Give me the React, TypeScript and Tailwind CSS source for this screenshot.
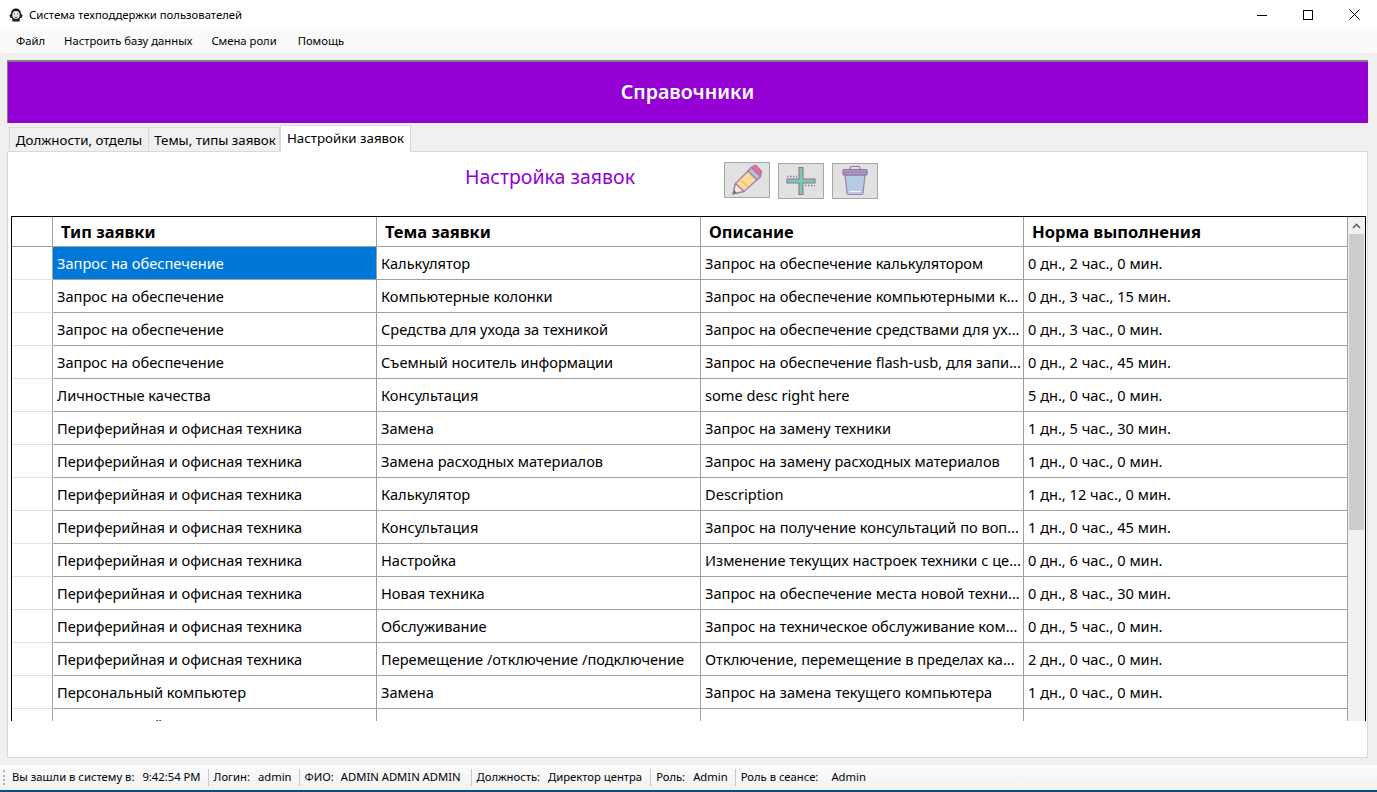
import React from 'react';

const rows = [
  ['Запрос на обеспечение', 'Калькулятор', 'Запрос на обеспечение калькулятором', '0 дн., 2 час., 0 мин.'],
  ['Запрос на обеспечение', 'Компьютерные колонки', 'Запрос на обеспечение компьютерными к...', '0 дн., 3 час., 15 мин.'],
  ['Запрос на обеспечение', 'Средства для ухода за техникой', 'Запрос на обеспечение средствами для ух...', '0 дн., 3 час., 0 мин.'],
  ['Запрос на обеспечение', 'Съемный носитель информации', 'Запрос на обеспечение flash-usb, для запи...', '0 дн., 2 час., 45 мин.'],
  ['Личностные качества', 'Консультация', 'some desc right here', '5 дн., 0 час., 0 мин.'],
  ['Периферийная и офисная техника', 'Замена', 'Запрос на замену техники', '1 дн., 5 час., 30 мин.'],
  ['Периферийная и офисная техника', 'Замена расходных материалов', 'Запрос на замену расходных материалов', '1 дн., 0 час., 0 мин.'],
  ['Периферийная и офисная техника', 'Калькулятор', 'Description', '1 дн., 12 час., 0 мин.'],
  ['Периферийная и офисная техника', 'Консультация', 'Запрос на получение консультаций по воп...', '1 дн., 0 час., 45 мин.'],
  ['Периферийная и офисная техника', 'Настройка', 'Изменение текущих настроек техники с це...', '0 дн., 6 час., 0 мин.'],
  ['Периферийная и офисная техника', 'Новая техника', 'Запрос на обеспечение места новой техни...', '0 дн., 8 час., 30 мин.'],
  ['Периферийная и офисная техника', 'Обслуживание', 'Запрос на техническое обслуживание ком...', '0 дн., 5 час., 0 мин.'],
  ['Периферийная и офисная техника', 'Перемещение /отключение /подключение', 'Отключение, перемещение в пределах ка...', '2 дн., 0 час., 0 мин.'],
  ['Персональный компьютер', 'Замена', 'Запрос на замена текущего компьютера', '1 дн., 0 час., 0 мин.'],
  ['Персональный компьютер', 'Консультация', 'Запрос на консультацию', '0 дн., 3 час., 0 мин.'],
];

const headers = ['Тип заявки', 'Тема заявки', 'Описание', 'Норма выполнения'];
const menu = ['Файл', 'Настроить базу данных', 'Смена роли', 'Помощь'];
const status = [
  { label: 'Вы зашли в систему в:', value: '9:42:54 PM', gap: 'ml-[8px]', end: 'pr-[7px]' },
  { label: 'Логин:', value: 'admin', gap: 'ml-[8px]', end: 'pr-[7px]' },
  { label: 'ФИО:', value: 'ADMIN ADMIN ADMIN', gap: 'ml-[7px]', end: 'pr-[10px]' },
  { label: 'Должность:', value: 'Директор центра', gap: 'ml-[8px]', end: 'pr-[8px]' },
  { label: 'Роль:', value: 'Admin', gap: 'ml-[8px]', end: 'pr-[7px]' },
  { label: 'Роль в сеансе:', value: 'Admin', gap: 'ml-[13px]', end: 'pr-[7px]' },
];

function PencilIcon() {
  return (
    <svg width="32" height="32" viewBox="0 0 32 32">
      <path d="M2 30 L4.5 19.5 L20 4 L29 13 L13 27.5 Z" fill="#f8dd98" stroke="#a17cae" strokeWidth="1.3" />
      <path d="M9 15 L17 23" stroke="#f0c060" strokeWidth="1.5" />
      <path d="M2 30 L4.5 19.5 L13 27.5 Z" fill="#f6ead9" stroke="#a17cae" strokeWidth="1.3" />
      <path d="M17 7 L26 16 L29.5 12.5 L20.5 3.5 Z" fill="#b7bfd4" stroke="#a17cae" strokeWidth="1.3" />
      <path d="M20.5 3.5 L23 1.5 Q24 1 25 1.5 L30.5 7 Q31 8 30.5 9 L29.5 12.5 Z" fill="#ee6c86" stroke="#a17cae" strokeWidth="1.1" />
      <path d="M2 30 L3 26 L6 29 Z" fill="#7d5a93" />
    </svg>
  );
}

function PlusIcon() {
  return (
    <svg width="32" height="32" viewBox="0 0 32 32">
      <path d="M14 2.5 H18 V14 H30 V18 H18 V29.5 H14 V18 H2 V14 H14 Z" fill="#76cfa8" stroke="#96709f" strokeWidth="1.1" />
      <path d="M2 11.5 H12 M20 20.5 H30" stroke="#96709f" strokeWidth="1.5" strokeDasharray="1.5 1.5" fill="none" />
    </svg>
  );
}

function TrashIcon() {
  return (
    <svg width="32" height="32" viewBox="0 0 32 32">
      <path d="M11 5 V3 Q11 1.5 12.5 1.5 H19.5 Q21 1.5 21 3 V5" fill="none" stroke="#96709f" strokeWidth="1.2" />
      <path d="M6 10 L8 28 Q8 29.5 10 29.5 H22 Q24 29.5 24 28 L26 10 Z" fill="#b5cbe6" stroke="#a17cae" strokeWidth="1.2" />
      <rect x="4" y="4.5" width="24" height="5.5" rx="1" fill="#a99ac4" stroke="#96709f" strokeWidth="1.2" />
      <path d="M6 7.2 H26" stroke="#7d6a9c" strokeWidth="1" strokeDasharray="1.5 1.5" />
      <path d="M10 26.5 H22" stroke="#f4f6fb" strokeWidth="1" />
    </svg>
  );
}

function AppLogo() {
  return (
    <svg width="16" height="16" viewBox="0 0 16 16">
      <path d="M8 1.5 C4.5 1.5 3 4 3 7 L1.5 8 L2 10.5 L4 11 L4.5 14.5 H11.5 L12 11 L14 10.5 L14.5 8 L13 7 C13 4 11.5 1.5 8 1.5 Z" fill="#1c1c1c" />
      <ellipse cx="8" cy="8" rx="3.7" ry="4" fill="#ececec" />
      <path d="M6 7 H7 M9 7 H10 M6.5 10 C7.5 11 8.5 11 9.5 10" stroke="#1c1c1c" strokeWidth="1" fill="none" />
    </svg>
  );
}

function ToolButton({ children, top }: { children: React.ReactNode; top: string }) {
  return (
    <div className={`w-[46px] h-[36px] flex items-center justify-center bg-[#e1e1e1] border border-[#a8a8a8] ${top}`}>
      {children}
    </div>
  );
}

const gridCols = 'grid grid-cols-[41px_324px_324px_323px_324px]';

export default function App() {
  return (
    <div className="w-[1377px] h-[792px] flex flex-col overflow-hidden bg-[#f0f0f0] text-black font-['Noto_Sans',sans-serif]">
      {/* window title */}
      <div className="h-[29px] bg-white flex items-center pl-[8px] shrink-0">
        <AppLogo />
        <span className="ml-[5px] text-[11.3px] leading-none">Система техподдержки пользователей</span>
        <div className="ml-auto flex items-center">
          <div className="w-[46px] flex justify-center">
            <svg width="10" height="10" viewBox="0 0 10 10"><path d="M0 5.5 H10" stroke="#000" strokeWidth="1" /></svg>
          </div>
          <div className="w-[46px] flex justify-center">
            <svg width="10" height="10" viewBox="0 0 10 10"><rect x="0.5" y="0.5" width="9" height="9" fill="none" stroke="#000" strokeWidth="1" /></svg>
          </div>
          <div className="w-[46px] flex justify-center">
            <svg width="11" height="11" viewBox="0 0 11 11"><path d="M0.5 0.5 L10.5 10.5 M10.5 0.5 L0.5 10.5" stroke="#000" strokeWidth="1" /></svg>
          </div>
        </div>
      </div>

      {/* menu */}
      <div className="h-[24px] bg-[#fafafa] flex items-center pl-[7px] shrink-0 text-[11.25px]">
        {menu.map((item, i) => (
          <span key={item} className={`px-[9px] ${i === 2 ? 'mr-[3px]' : 'mr-[1px]'}`}>{item}</span>
        ))}
      </div>

      <div className="pl-[7px] pr-[9px] pt-[7px] flex flex-col shrink-0">
        {/* banner */}
        <div className="h-[63px] bg-[#9400d3] border-t-2 border-l border-[#808080] flex items-center justify-center pb-[2px] pr-[1px] text-white text-[19.6px] font-semibold">
          Справочники
        </div>

        {/* tabs */}
        <div className="flex items-end h-[29px] pl-[2px] text-[13.3px] relative z-10">
          <div className="h-[25px] w-[140px] bg-[#f0f0f0] border border-[#d9d9d9] flex items-center justify-center pt-[2px]">Должности, отделы</div>
          <div className="h-[25px] w-[131px] bg-[#f0f0f0] border border-l-0 border-[#d9d9d9] flex items-center justify-center pt-[2px] pl-[2px]">Темы, типы заявок</div>
          <div className="h-[27px] w-[131px] bg-white border border-b-0 border-[#d9d9d9] flex items-center justify-center">Настройки заявок</div>
        </div>

        {/* tab page */}
        <div className="h-[607px] -mt-px bg-white border border-[#d9d9d9] pl-[3px] flex flex-col">
          <div className="h-[64px] flex shrink-0">
            <div className="ml-[454px] w-[259px] mt-[11px] text-[#9400d3] text-[19.5px] leading-[28px] whitespace-nowrap">Настройка заявок</div>
            <div className="mt-[10px] flex gap-[8px] items-start">
              <ToolButton top="mt-0"><PencilIcon /></ToolButton>
              <ToolButton top="mt-[1px]"><PlusIcon /></ToolButton>
              <ToolButton top="mt-[1px]"><TrashIcon /></ToolButton>
            </div>
          </div>

          {/* table */}
          <div className="w-[1355px] h-[505px] border-t-[1.5px] border-x border-black overflow-hidden flex text-[14.6px]">
            <div className="w-[1336px] shrink-0">
              <div className={`${gridCols} h-[30px] border-b border-[#a0a0a0]`}>
                <div className="border-r border-[#a0a0a0]" />
                {headers.map((h) => (
                  <div key={h} className="border-r border-[#a0a0a0] pl-[8px] font-bold text-[16.5px] leading-[29px]">{h}</div>
                ))}
              </div>
              {rows.map((row, i) => (
                <div key={i} className={`${gridCols} h-[33px]`}>
                  <div className="border-r border-[#a0a0a0] border-b border-b-[#e3e3e3]" />
                  {row.map((cell, j) => (
                    <div
                      key={j}
                      className={`border-r border-b border-[#a0a0a0] pl-[4px] leading-[33px] whitespace-nowrap overflow-hidden ${
                        i === 0 && j === 0 ? 'bg-[#0078d7] text-white' : ''
                      }`}
                    >
                      {cell}
                    </div>
                  ))}
                </div>
              ))}
            </div>
            {/* scrollbar */}
            <div className="w-[17px] shrink-0 bg-[#f0f0f0] flex flex-col">
              <div className="h-[17px] flex items-center justify-center">
                <svg width="9" height="6" viewBox="0 0 9 6">
                  <path d="M1 5 L4.5 1.5 L8 5" fill="none" stroke="#606060" strokeWidth="1.6" />
                </svg>
              </div>
              <div className="h-[296px] mx-px bg-[#cdcdcd]" />
            </div>
          </div>
        </div>
      </div>

      {/* status bar */}
      <div className="mt-[7px] h-[25px] bg-gradient-to-b from-[#fbfbfb] to-[#f2f2f2] flex items-center pl-[3px] text-[11.25px] shrink-0">
        <div className="w-[3px] h-[15px] mr-[6px] border-l-2 border-dotted border-[#b0b0b0]" />
        {status.map(({ label, value, gap, end }, i) => (
          <div key={label} className={`flex items-center h-[17px] ${end} ${i > 0 ? 'border-l border-[#c8c8c8] pl-[5px]' : ''}`}>
            <span>{label}</span>
            <span className={gap}>{value}</span>
          </div>
        ))}
      </div>
      <div className="h-[2px] bg-[#0f4c81] shrink-0" />
    </div>
  );
}
